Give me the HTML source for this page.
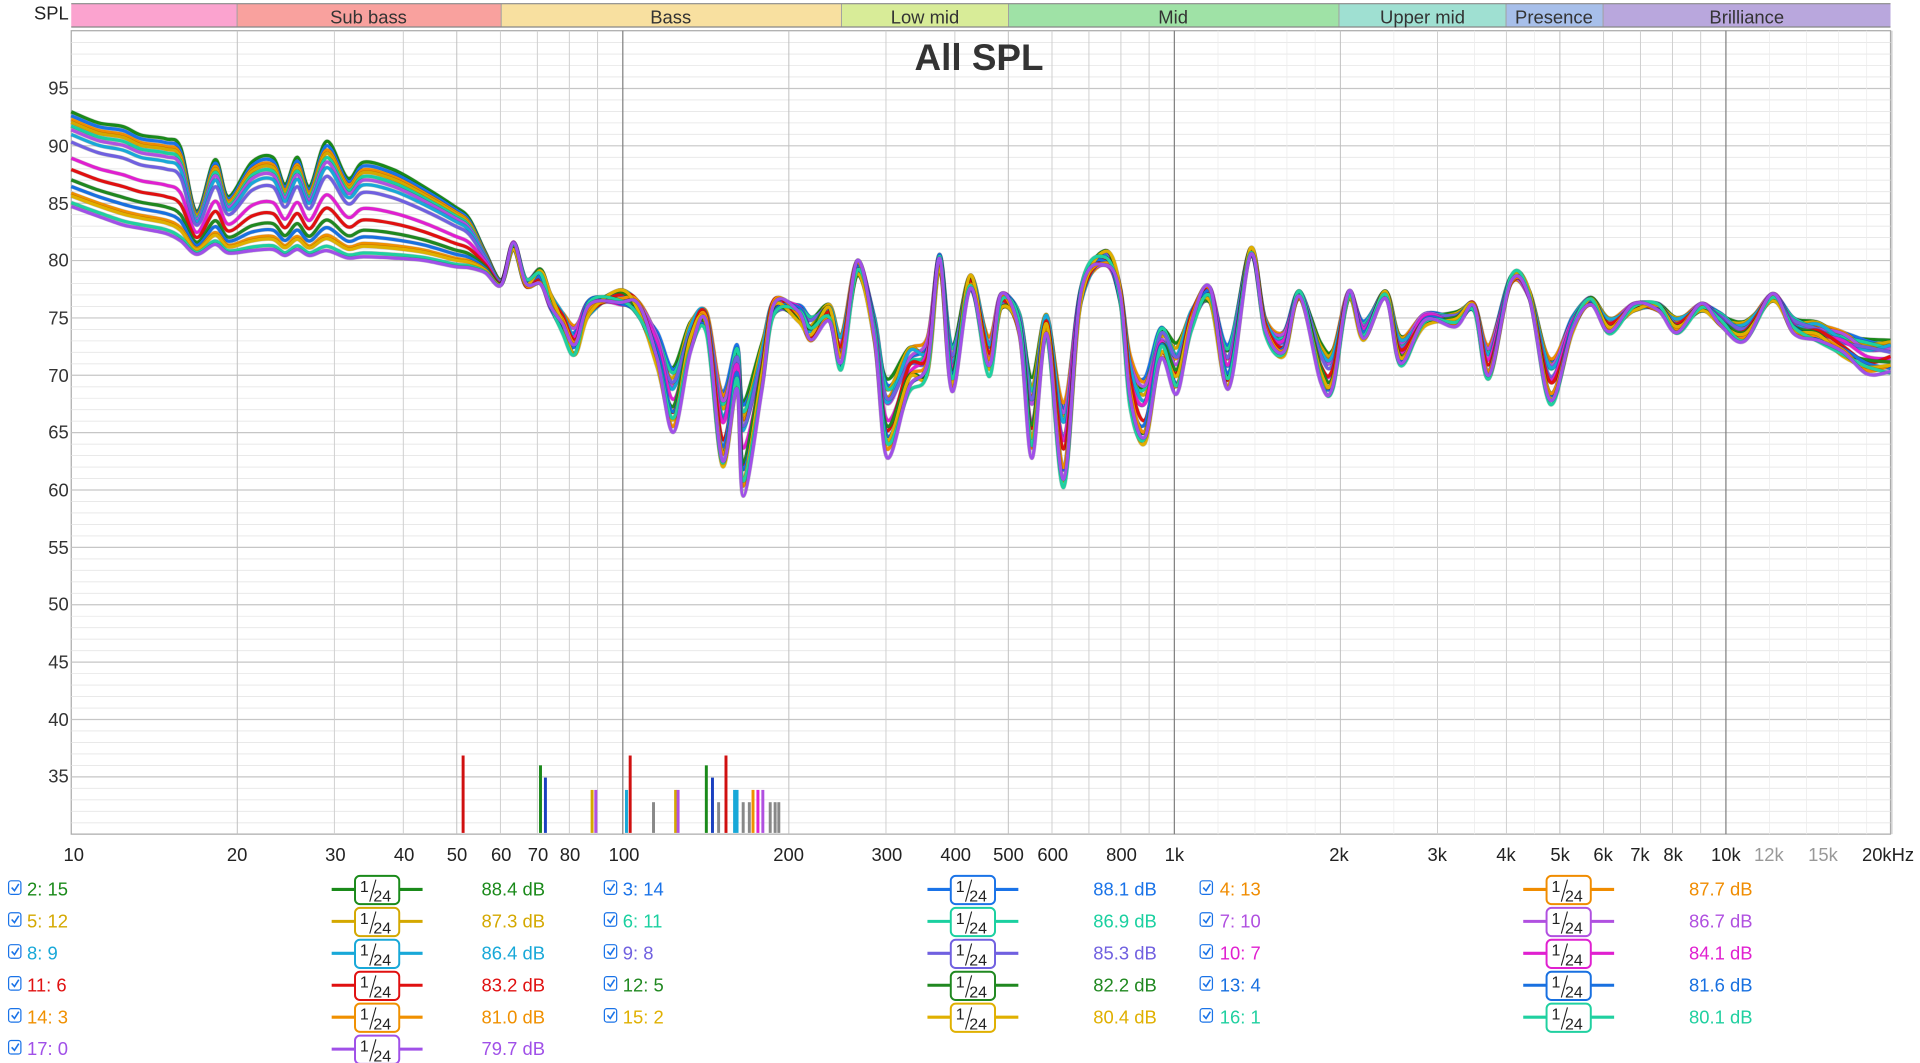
<!DOCTYPE html>
<html><head><meta charset="utf-8"><style>
html,body{margin:0;padding:0;background:#fff;overflow:hidden}
svg{display:block}
text{font-family:"Liberation Sans","DejaVu Sans",sans-serif}
</style></head><body>
<svg id="s" width="1920" height="1063" viewBox="0 0 1563 865.3" preserveAspectRatio="none" xmlns="http://www.w3.org/2000/svg">
<rect x="0" y="0" width="1563" height="866" fill="#fff"/>
<g id="grid"></g>
<g font-size="15" fill="#333" text-anchor="middle">
<rect x="58" y="3" width="135" height="19" fill="#fba3cf"/>
<rect x="193" y="3" width="215" height="19" fill="#f9a19e"/>
<rect x="408" y="3" width="277" height="19" fill="#f8e0a0"/>
<rect x="685" y="3" width="136" height="19" fill="#d8ec98"/>
<rect x="821" y="3" width="269" height="19" fill="#9fe2a6"/>
<rect x="1090" y="3" width="136" height="19" fill="#9fe0d2"/>
<rect x="1226" y="3" width="79" height="19" fill="#a7bfea"/>
<rect x="1305" y="3" width="234" height="19" fill="#b9a7dd"/>
<g stroke="#a0a0a0" stroke-width="0.8"><line x1="193" y1="3" x2="193" y2="22"/><line x1="408" y1="3" x2="408" y2="22"/><line x1="685" y1="3" x2="685" y2="22"/><line x1="821" y1="3" x2="821" y2="22"/><line x1="1090" y1="3" x2="1090" y2="22"/><line x1="1226" y1="3" x2="1226" y2="22"/><line x1="1305" y1="3" x2="1305" y2="22"/></g>
<line x1="58" y1="3" x2="1539" y2="3" stroke="#888" stroke-width="1"/>
<line x1="58" y1="22" x2="1539" y2="22" stroke="#888" stroke-width="1"/>
<text x="300" y="19">Sub bass</text><text x="546" y="19">Bass</text><text x="753" y="19">Low mid</text><text x="955" y="19">Mid</text><text x="1158" y="19">Upper mid</text><text x="1265" y="19">Presence</text><text x="1422" y="19">Brilliance</text>
</g>
<text x="56" y="16" font-size="15" fill="#222" text-anchor="end">SPL</text>
<text x="797" y="57" font-size="30" font-weight="bold" fill="#333" text-anchor="middle">All SPL</text>
<g id="curves"></g>
<g id="marks"></g>
<g font-size="15" fill="#333" text-anchor="end">
<text x="56" y="77">95</text><text x="56" y="124">90</text><text x="56" y="171">85</text><text x="56" y="217">80</text><text x="56" y="264">75</text><text x="56" y="311">70</text><text x="56" y="357">65</text><text x="56" y="404">60</text><text x="56" y="451">55</text><text x="56" y="497">50</text><text x="56" y="544">45</text><text x="56" y="591">40</text><text x="56" y="637">35</text>
</g>
<g font-size="15" fill="#222" text-anchor="middle">
<text x="60" y="701">10</text><text x="193" y="701">20</text><text x="273" y="701">30</text><text x="329" y="701">40</text><text x="372" y="701">50</text><text x="408" y="701">60</text><text x="438" y="701">70</text><text x="464" y="701">80</text><text x="508" y="701">100</text><text x="642" y="701">200</text><text x="722" y="701">300</text><text x="778" y="701">400</text><text x="821" y="701">500</text><text x="857" y="701">600</text><text x="913" y="701">800</text><text x="956" y="701">1k</text><text x="1090" y="701">2k</text><text x="1170" y="701">3k</text><text x="1226" y="701">4k</text><text x="1270" y="701">5k</text><text x="1305" y="701">6k</text><text x="1335" y="701">7k</text><text x="1362" y="701">8k</text><text x="1405" y="701">10k</text><text x="1440" y="701" fill="#999">12k</text><text x="1484" y="701" fill="#999">15k</text><text x="1537" y="701">20kHz</text>
</g>
<g id="legend" font-size="15"></g>
</svg>
<script>
(function(){
var NS="http://www.w3.org/2000/svg";
function el(p,t,a,txt){var e=document.createElementNS(NS,t);for(var k in a)e.setAttribute(k,a[k]);if(txt!=null)e.textContent=txt;p.appendChild(e);return e;}
function X(f){return 58+449*Math.log10(f/10);}
function Y(db){return 72+(95-db)*9.34;}
var g=document.getElementById("grid");
el(g,"rect",{x:58,y:25,width:1481,height:654,fill:"#fff",stroke:"#aaa","stroke-width":1});
for(var db=31;db<100;db++){el(g,"line",{x1:58,x2:1539,y1:Y(db),y2:Y(db),stroke:db%5==0?"#c6c6c6":"#e6e6e6","stroke-width":db%5==0?1:0.7});}
for(var d=3;d<=4;d++){[1.2,1.4,1.6,1.8,2.5,3.5,4.5].forEach(function(m){var f=m*Math.pow(10,d);if(f<20000)el(g,"line",{x1:X(f),x2:X(f),y1:25,y2:679,stroke:"#ececec","stroke-width":0.6});});}
for(var d=1;d<=4;d++)for(var m=1;m<=9;m++){var f=m*Math.pow(10,d);if(f<=10||f>20000)continue;var maj=(m==1);
el(g,"line",{x1:X(f),x2:X(f),y1:25,y2:679,stroke:maj?"#808080":(m==2||m==5?"#c0c0c0":"#cfcfcf"),"stroke-width":maj?1:0.8});}
var cols=["#1a8a1a","#1a73e8","#f08c00","#d4a800","#1ad0a0","#b050e0","#18a8d8","#7060e0","#e020d0","#e01010","#208820","#1870e0","#f09000","#e0b000","#20d0a0","#a050e8"];
var T=[0,.04,.08,.11,.15,.19,.24,.32,.49,.61,.72,.79,.86,.89,.96,1];
var topc=[[58,91],[80,100],[100,103],[115,110],[135,113],[147,120],[160,172],[175,130],[186,160],[205,132],[222,128],[232,150],[242,128],[252,152],[266,115],[283,145],[296,132],[320,138],[345,152],[370,168],[382,178],[395,205],[408,228]];
var bot=[168,176,183,186,190,196,207,199,206,204,203,208,203,208,204,210,209,210,212,217,218,222,232];
var up=[[418,200],[428,230],[440,225],[448,245],[458,262],[468,278],[480,250],[505,242],[520,252],[535,285],[548,325],[562,275],[575,262],[588,350],[600,300],[605,365],[620,300],[630,250],[650,255],[660,268],[675,255],[685,285],[698,218],[712,270],[722,340],[740,300],[755,290],[765,213],[775,300],[790,230],[805,290],[815,245],[830,265],[840,340],[852,265],[866,362],[880,240],[900,210],[912,240],[920,310],[932,335],[945,280],[958,300],[970,260],[985,240],[1000,300],[1018,205],[1030,265],[1045,280],[1058,240],[1075,295],[1085,300],[1098,240],[1110,270],[1128,240],[1140,285],[1160,260],[1185,260],[1200,250],[1212,295],[1230,228],[1245,240],[1262,310],[1280,265],[1295,245],[1310,265],[1330,250],[1350,250],[1365,265],[1385,250],[1400,260],[1420,270],[1443,242],[1460,265],[1480,270],[1500,280],[1520,290],[1539,290]];
function path(p){var n=p.length,d="M"+p[0][0].toFixed(1)+","+p[0][1].toFixed(1);for(var i=0;i<n-1;i++){var p0=p[Math.max(i-1,0)],p1=p[i],p2=p[i+1],p3=p[Math.min(i+2,n-1)];d+=" C"+(p1[0]+(p2[0]-p0[0])/6).toFixed(1)+","+(p1[1]+(p2[1]-p0[1])/6).toFixed(1)+" "+(p2[0]-(p3[0]-p1[0])/6).toFixed(1)+","+(p2[1]-(p3[1]-p1[1])/6).toFixed(1)+" "+p2[0].toFixed(1)+","+p2[1].toFixed(1);}return d;}
var cg=document.getElementById("curves");
for(var k=0;k<16;k++){var t=T[k],pts=[];
for(var i=0;i<topc.length;i++)pts.push([topc[i][0],topc[i][1]+t*(bot[i]-topc[i][1])]);
for(var i=0;i<up.length;i++){var x=up[i][0],y=up[i][1];var s=(t-0.5)*2;var depth=Math.max(0,y-250)*0.3;var w=x>1000?1.0:2.0;var j=w*3*Math.sin(x*0.11+k*1.9);
if(x<440)j*=0.5;pts.push([x,y+s*depth+j]);}
var d=path(pts);
el(cg,"path",{d:d,fill:"none",stroke:"rgba(0,0,0,0.2)","stroke-width":3.4,"stroke-linejoin":"round"});
el(cg,"path",{d:d,fill:"none",stroke:cols[k],"stroke-width":2.6,"stroke-linejoin":"round"});}
var mk=document.getElementById("marks");
[[377,615,"#d01010"],[440,623,"#1a8a1a"],[444,633,"#1a40c0"],[482,643,"#d4a800"],[485,643,"#b050e0"],[510,643,"#18a8d8"],[513,615,"#d01010"],[532,653,"#888"],[550,643,"#d4a800"],[552,643,"#b050e0"],[575,623,"#1a8a1a"],[580,633,"#1a40c0"],[585,653,"#888"],[591,615,"#d01010"],[598,643,"#18a8d8"],[600,643,"#18a8d8"],[605,653,"#888"],[610,653,"#888"],[613,643,"#f09000"],[617,643,"#e020d0"],[621,643,"#b050e0"],[627,653,"#888"],[631,653,"#888"],[634,653,"#888"]].forEach(function(m){el(mk,"rect",{x:m[0]-1.2,y:m[1],width:2.4,height:678-m[1],fill:m[2]});});
var L=document.getElementById("legend");
var rows=[[["2: 15","#1a8a1a","88.4"],["3: 14","#1a73e8","88.1"],["4: 13","#f08c00","87.7"]],
[["5: 12","#d4a800","87.3"],["6: 11","#1ad0a0","86.9"],["7: 10","#b050e0","86.7"]],
[["8: 9","#18a8d8","86.4"],["9: 8","#7060e0","85.3"],["10: 7","#e020d0","84.1"]],
[["11: 6","#e01010","83.2"],["12: 5","#208820","82.2"],["13: 4","#1870e0","81.6"]],
[["14: 3","#f09000","81.0"],["15: 2","#e0b000","80.4"],["16: 1","#20d0a0","80.1"]],
[["17: 0","#a050e8","79.7"]]];
var cx=[[7,22,307,392],[492,507,792,890],[977,993,1277,1375]];
rows.forEach(function(r,ri){var y=724+ri*26;r.forEach(function(c,ci){var p=cx[ci];
el(L,"rect",{x:p[0],y:y-7,width:10,height:11,rx:2,fill:"#fff",stroke:"#1a73e8","stroke-width":1});
el(L,"path",{d:"M"+(p[0]+2.5)+","+(y-1.5)+" l2.3,2.5 l3.5,-5.5",fill:"none",stroke:"#1a73e8","stroke-width":1.3});
el(L,"text",{x:p[1],y:y+5,fill:c[1]},c[0]);
var ix=p[2];
el(L,"line",{x1:ix-37,x2:ix+37,y1:y,y2:y,stroke:c[1],"stroke-width":2.5});
el(L,"rect",{x:ix-18,y:y-11,width:36,height:23,rx:4,fill:"#fff",stroke:c[1],"stroke-width":1.6});
el(L,"text",{x:ix-14,y:y+2,fill:"#222","font-size":"13"},"1");
el(L,"line",{x1:ix-1,y1:y-8,x2:ix-6,y2:y+10,stroke:"#222","stroke-width":0.9});
el(L,"text",{x:ix-3,y:y+10,fill:"#222","font-size":"13"},"24");
el(L,"text",{x:p[3],y:y+5,fill:c[1]},c[2]+" dB");});});
})();
</script>
</body></html>
